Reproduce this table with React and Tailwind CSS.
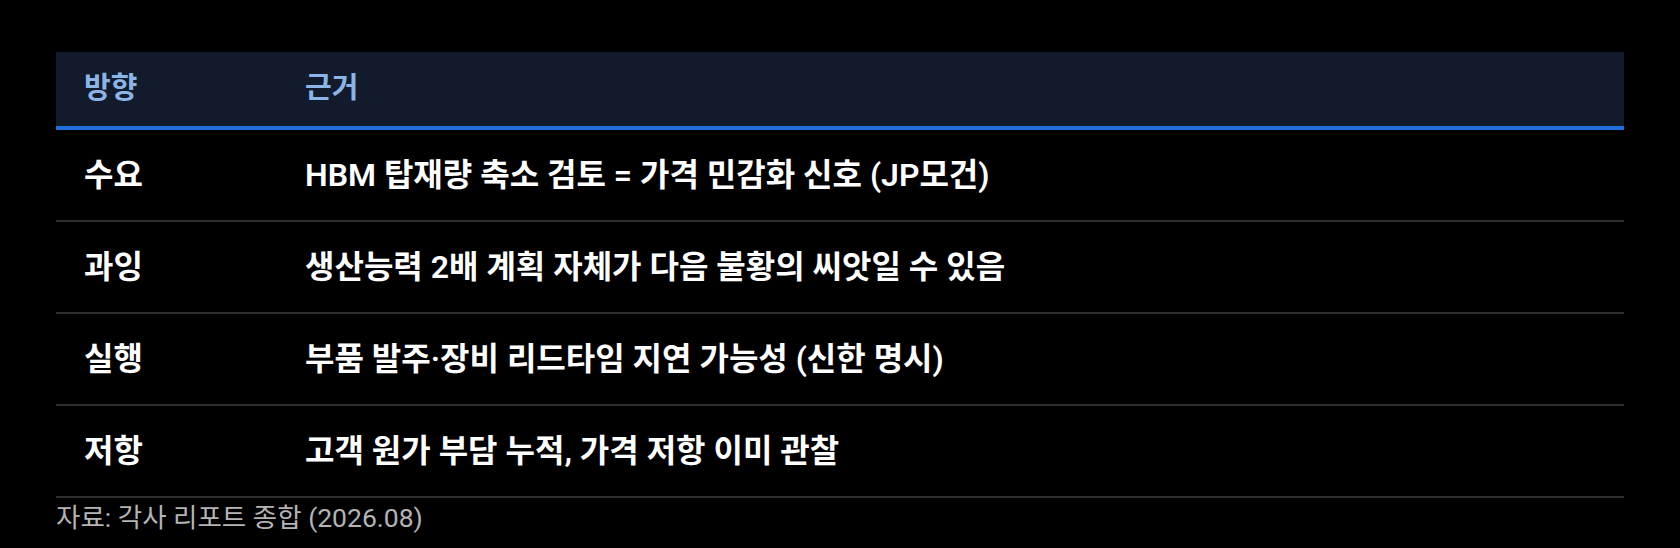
import React from 'react';

const rows = [
    ["수요", "HBM 탑재량 축소 검토 = 가격 민감화 신호 (JP모건)"],
    ["과잉", "생산능력 2배 계획 자체가 다음 불황의 씨앗일 수 있음"],
    ["실행", "부품 발주·장비 리드타임 지연 가능성 (신한 명시)"],
    ["저항", "고객 원가 부담 누적, 가격 저항 이미 관찰"],
];

export default function App() {
    return (
        <div
            className="min-h-[548px] w-full bg-black px-[56px] pt-[52px]"
            style={{ fontFamily: 'Roboto, "Noto Sans CJK KR", sans-serif' }}
        >
            <div className="w-full">
                <div className="grid grid-cols-[221px_1fr] h-[78px] items-center bg-[#111b2b] border-b-4 border-[#1f6fdc]">
                    <div className="px-[28px] text-[29px] font-bold text-[#8cb4e6]">방향</div>
                    <div className="px-[28px] text-[29px] font-bold text-[#8cb4e6]">근거</div>
                </div>
                {rows.map(([dir, reason], index) => (
                    <div
                        key={`row${index}`}
                        className="grid grid-cols-[221px_1fr] h-[92px] items-center border-b-2 border-[#2e2e2e]"
                    >
                        <div className="px-[28px] text-[32px] font-semibold text-white">{dir}</div>
                        <div className="px-[28px] text-[32px] font-semibold text-white">{reason}</div>
                    </div>
                ))}
            </div>
            <div className="pt-[2px] text-[26.5px] leading-[36px] text-[#b4b4b4]">자료: 각사 리포트 종합 (2026.08)</div>
        </div>
    );
}
